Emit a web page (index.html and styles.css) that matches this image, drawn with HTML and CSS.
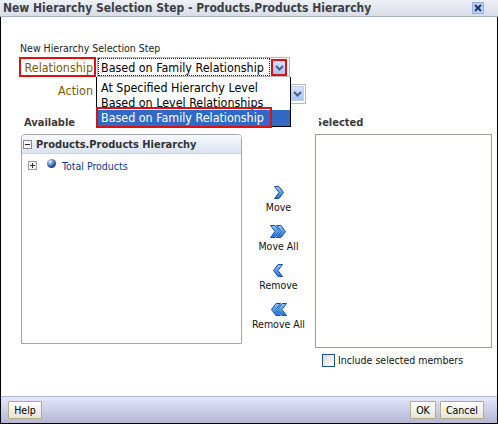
FILE: index.html
```html
<!DOCTYPE html>
<html>
<head>
<meta charset="utf-8">
<link rel="stylesheet" href="styles.css">
</head>
<body>
<div class="window">
  <div class="titlebar">
    <span class="title">New Hierarchy Selection Step - Products.Products Hierarchy</span>
    <svg class="close" width="12" height="12" viewBox="0 0 12 12"><rect x="0.5" y="0.5" width="11" height="11" fill="#bcd0f2" stroke="#94aee0"/><path d="M3 3L9 9M9 3L3 9" stroke="#1b3669" stroke-width="2"/></svg>
  </div>
  <div class="frame">
    <div class="content">
      <div class="step-title">New Hierarchy Selection Step</div>
      <div class="form">
        <div class="field-label hl">Relationship</div>
        <div class="select select-rel">
          <div class="select-value focus">Based on Family Relationship</div>
          <div class="select-btn hl-btn"><svg width="9" height="6" viewBox="0 0 9 6"><path d="M1 1L4.5 4.5L8 1" fill="none" stroke="#4a5f88" stroke-width="2"/></svg></div>
        </div>
        <div class="field-label action">Action</div>
        <div class="select select-act">
          <div class="select-value"></div>
          <div class="select-btn act-btn"><svg width="9" height="6" viewBox="0 0 9 6"><path d="M1 1L4.5 4.5L8 1" fill="none" stroke="#4a5f88" stroke-width="2"/></svg></div>
        </div>
      </div>

      <div class="lists">
        <div class="list-label avail">Available</div>
        <div></div>
        <div class="list-label sel">Selected</div>

        <div class="tree">
          <div class="tree-head">
            <svg width="9" height="9" viewBox="0 0 9 9"><rect x="0.5" y="0.5" width="8" height="8" fill="#fafafa" stroke="#8a8a8a"/><path d="M2 4.5h5" stroke="#222"/></svg>
            <span>Products.Products Hierarchy</span>
          </div>
          <div class="tree-body">
            <div class="tree-row">
              <svg class="expander" width="9" height="9" viewBox="0 0 9 9"><rect x="0.5" y="0.5" width="8" height="8" fill="#f4f4f4" stroke="#9a9a9a"/><path d="M2 4.5h5M4.5 2v5" stroke="#333"/></svg>
              <span class="sphere"></span>
              <span class="tree-label">Total Products</span>
            </div>
          </div>
        </div>

        <div class="shuttle">
          <div class="shuttle-item">
            <svg width="10" height="13" viewBox="0 0 10 13"><defs><linearGradient id="g1" x1="0" y1="0" x2="0" y2="1"><stop offset="0" stop-color="#8ccaff"/><stop offset="1" stop-color="#2070d8"/></linearGradient></defs><path d="M0.5 0.5H5L9.5 6.5L5 12.5H0.5L5 6.5Z" fill="url(#g1)" stroke="#1a4f9c" stroke-linejoin="round"/></svg>
            <span>Move</span>
          </div>
          <div class="shuttle-item">
            <svg width="16" height="13" viewBox="0 0 16 13"><defs><linearGradient id="g2" x1="0" y1="0" x2="0" y2="1"><stop offset="0" stop-color="#8ccaff"/><stop offset="1" stop-color="#2070d8"/></linearGradient></defs><path d="M0.5 0.5H5L9.5 6.5L5 12.5H0.5L5 6.5Z" fill="url(#g2)" stroke="#1a4f9c" stroke-linejoin="round"/><path d="M6.5 0.5H11L15.5 6.5L11 12.5H6.5L11 6.5Z" fill="url(#g2)" stroke="#1a4f9c" stroke-linejoin="round"/></svg>
            <span>Move All</span>
          </div>
          <div class="shuttle-item">
            <svg width="10" height="13" viewBox="0 0 10 13"><defs><linearGradient id="g3" x1="0" y1="0" x2="0" y2="1"><stop offset="0" stop-color="#8ccaff"/><stop offset="1" stop-color="#2070d8"/></linearGradient></defs><path d="M9.5 0.5H5L0.5 6.5L5 12.5H9.5L5 6.5Z" fill="url(#g3)" stroke="#1a4f9c" stroke-linejoin="round"/></svg>
            <span>Remove</span>
          </div>
          <div class="shuttle-item">
            <svg width="16" height="13" viewBox="0 0 16 13"><defs><linearGradient id="g4" x1="0" y1="0" x2="0" y2="1"><stop offset="0" stop-color="#8ccaff"/><stop offset="1" stop-color="#2070d8"/></linearGradient></defs><path d="M15.5 0.5H11L6.5 6.5L11 12.5H15.5L11 6.5Z" fill="url(#g4)" stroke="#1a4f9c" stroke-linejoin="round"/><path d="M9.5 0.5H5L0.5 6.5L5 12.5H9.5L5 6.5Z" fill="url(#g4)" stroke="#1a4f9c" stroke-linejoin="round"/></svg>
            <span>Remove All</span>
          </div>
        </div>

        <div class="sel-col">
          <div class="sel-box"></div>
          <div class="check"><span class="checkbox"></span><span>Include selected members</span></div>
        </div>
      </div>

      <div class="popup">
        <div class="option">At Specified Hierarchy Level</div>
        <div class="option">Based on Level Relationships</div>
        <div class="option selected">Based on Family Relationship</div>
        <div class="popup-mark"></div>
      </div>
      <div class="cover"></div>
    </div>
    <div class="footer">
      <button class="btn btn-help">Help</button>
      <span class="spacer"></span>
      <button class="btn btn-ok">OK</button>
      <button class="btn btn-cancel">Cancel</button>
    </div>
  </div>
</div>
</body>
</html>
```
FILE: styles.css
```css
html, body {
  margin: 0;
  padding: 0;
}
body {
  width: 498px;
  height: 424px;
  overflow: hidden;
  font-family: "DejaVu Sans Condensed", "Liberation Sans", Arial, sans-serif;
  background: #fff;
}
.window {
  width: 498px;
  height: 424px;
  display: flex;
  flex-direction: column;
}
.titlebar {
  height: 16px;
  flex: none;
  border-bottom: 1px solid #a9b1bf;
  background: linear-gradient(#eef1f6, #d7dde7);
  display: flex;
  align-items: center;
  justify-content: space-between;
  padding: 0 14px 0 3px;
}
.title {
  font-size: 12px;
  font-weight: bold;
  line-height: 16px;
  color: #3b3f46;
  white-space: nowrap;
}
.close {
  display: block;
}
.frame {
  flex: 1;
  min-height: 0;
  display: flex;
  flex-direction: column;
  border: 1px solid #000;
  border-top: 0;
}
.content {
  flex: 1;
  position: relative;
  padding: 25px 5px 0 19px;
  background: #fff;
}
.step-title {
  font-size: 10.5px;
  line-height: 13px;
  color: #222;
}
.form {
  display: grid;
  grid-template-columns: 77px 209px;
  column-gap: 1px;
  row-gap: 7px;
  margin: 2px 0 0 -1px;
  align-items: start;
}
.field-label {
  font-size: 12.4px;
  color: #7a5a08;
  text-align: right;
  white-space: nowrap;
}
.field-label.hl {
  height: 20px;
  box-sizing: border-box;
  border: 2px solid #e01010;
  padding: 1px 1px 0 0;
  line-height: 15px;
}
.field-label.action {
  line-height: 13px;
  margin-top: 0;
  padding-right: 3px;
}
.select {
  display: flex;
  height: 20px;
  box-sizing: border-box;
  border: 1px solid #b9b9b9;
  background: #fff;
}
.select-rel {
  width: 193px;
  padding-right: 2px;
}
.select-act {
  width: 209px;
  padding-right: 1px;
}
.select-value {
  flex: 1;
  font-size: 12.4px;
  line-height: 14px;
  padding: 2px 0 0 3px;
  color: #000;
  white-space: nowrap;
  overflow: hidden;
}
.select-value.focus {
  border: 1px dotted #222;
  padding-left: 2px;
}
.select-btn {
  box-sizing: border-box;
  display: flex;
  align-items: center;
  justify-content: center;
  background: linear-gradient(#d8e5fb, #a9c3ef);
}
.select-btn svg {
  display: block;
}
.hl-btn {
  width: 16px;
  height: 17px;
  margin: 1px 0 0 1px;
  border: 2px solid #e01010;
}
.act-btn {
  width: 13px;
  height: 15px;
  margin: 1px 0 0 1px;
  border: 1px solid #bcd0f4;
}
.lists {
  display: grid;
  grid-template-columns: 221px 73px 177px;
  grid-template-rows: 14px auto;
  row-gap: 4px;
  margin: 12px 0 0 1px;
}
.list-label {
  font-size: 11px;
  font-weight: bold;
  line-height: 14px;
  color: #3a3a3a;
}
.avail {
  padding-left: 3px;
}
.tree {
  height: 210px;
  box-sizing: border-box;
  border: 1px solid #a5a5a5;
  border-radius: 4px 4px 0 0;
  overflow: hidden;
}
.tree-head {
  height: 18px;
  display: flex;
  align-items: center;
  gap: 4px;
  padding-left: 1px;
  background: linear-gradient(#f7f9fd, #dae3f0);
  border-bottom: 1px solid #c8d2e0;
  font-size: 11px;
  font-weight: bold;
  color: #333;
  white-space: nowrap;
}
.tree-head svg {
  display: block;
}
.tree-body {
  padding: 4px 0 0 6px;
}
.tree-row {
  display: flex;
  align-items: flex-start;
  height: 16px;
}
.expander {
  display: block;
  margin-top: 3px;
}
.sphere {
  width: 9px;
  height: 9px;
  margin: 1px 0 0 10px;
  border-radius: 50%;
  background: radial-gradient(circle at 35% 30%, #eef4ff 0, #7a9ad8 30%, #22439a 65%, #142b6e 100%);
}
.tree-label {
  margin-left: 6px;
  font-size: 10.5px;
  line-height: 16px;
  color: #12318a;
  white-space: nowrap;
}
.shuttle {
  display: flex;
  flex-direction: column;
  align-items: center;
  gap: 11px;
  padding-top: 52px;
}
.shuttle-item {
  display: flex;
  flex-direction: column;
  align-items: center;
  font-size: 10.5px;
  line-height: 13px;
  color: #111;
  white-space: nowrap;
}
.shuttle-item svg {
  display: block;
  margin-bottom: 2px;
}
.sel-col {
  display: flex;
  flex-direction: column;
}
.sel-box {
  height: 214px;
  box-sizing: border-box;
  border: 1px solid #9d9e8f;
}
.check {
  display: flex;
  align-items: flex-start;
  gap: 3px;
  margin: 6px 0 0 7px;
  font-size: 10.5px;
  line-height: 13px;
  color: #111;
  white-space: nowrap;
}
.checkbox {
  width: 13px;
  height: 13px;
  flex: none;
  box-sizing: border-box;
  border: 1px solid #1c5180;
  background: linear-gradient(135deg, #d9d9d2, #fdfdfd);
}
.popup {
  position: absolute;
  left: 95px;
  top: 60px;
  width: 195px;
  height: 50px;
  box-sizing: border-box;
  border: 1px solid #000;
  border-top: 0;
  padding-top: 3px;
  background: #fff;
  font-size: 12.4px;
}
.option {
  line-height: 15px;
  padding-left: 4px;
  color: #000;
  white-space: nowrap;
}
.option.selected {
  line-height: 16px;
  background: #316ac5;
  color: #fff;
}
.popup-mark {
  position: absolute;
  left: -1px;
  top: 30px;
  width: 176px;
  height: 21px;
  box-sizing: border-box;
  border: 2px solid #e01010;
}
.cover {
  position: absolute;
  left: 290px;
  top: 97px;
  width: 28px;
  height: 18px;
  background: #fff;
}
.footer {
  height: 26px;
  flex: none;
  border-top: 1px solid #abb6d4;
  background: linear-gradient(#e1e7fb, #b4b6d3);
  display: flex;
  align-items: center;
  gap: 4px;
  padding: 0 13px 0 7px;
}
.spacer {
  flex: 1;
}
.btn {
  height: 18px;
  box-sizing: border-box;
  margin: 0;
  padding: 0;
  border: 1px solid #b5ae85;
  border-radius: 1px;
  background: linear-gradient(#fefefc, #e7e5d7);
  font-family: "DejaVu Sans Condensed", "Liberation Sans", Arial, sans-serif;
  font-size: 10.5px;
  line-height: 16px;
  color: #000;
  text-align: center;
}
.btn-help {
  width: 34px;
}
.btn-ok {
  width: 26px;
}
.btn-cancel {
  width: 44px;
}
```
